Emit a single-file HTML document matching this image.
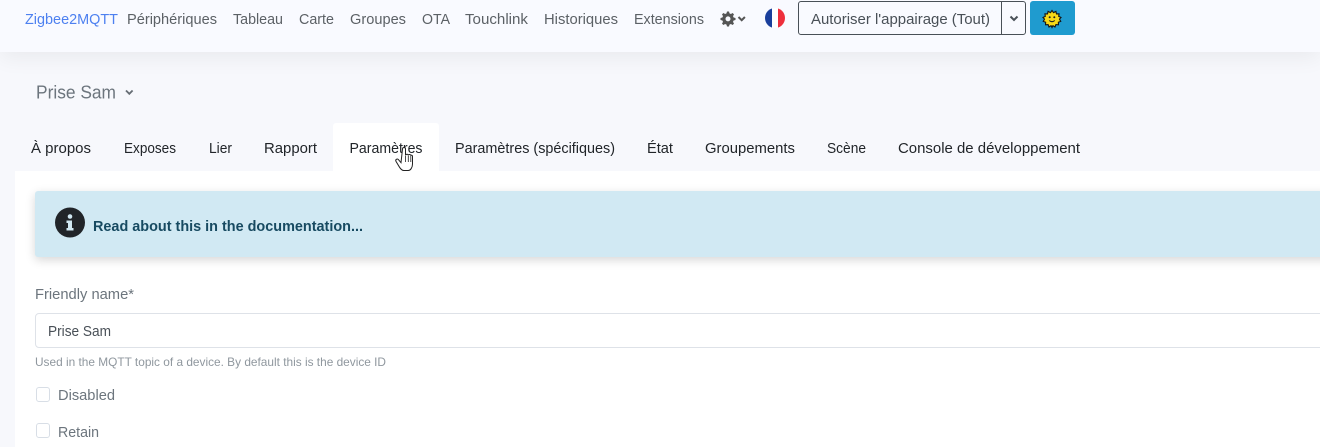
<!DOCTYPE html>
<html lang="fr">
<head>
<meta charset="utf-8">
<title>Zigbee2MQTT</title>
<style>
html,body{margin:0;padding:0;width:1320px;height:447px;overflow:hidden;background:#f7f8fc;font-family:"Liberation Sans",sans-serif}
.a{position:absolute;box-sizing:border-box}
svg{position:absolute;left:0;top:0}
text{font-family:"Liberation Sans",sans-serif}
</style>
</head>
<body>
<div class="a" style="left:0;top:0;width:1320px;height:52px;background:#f9faff;box-shadow:0 6px 22px rgba(0,0,0,.06)"></div>
<div class="a" style="left:333px;top:123px;width:106px;height:50px;background:#fff;border-radius:3px 3px 0 0"></div>
<div class="a" style="left:15px;top:171px;width:1305px;height:276px;background:#fff"></div>
<div class="a" style="left:35px;top:191px;width:1300px;height:66px;background:#d1e9f3;border-radius:3px;box-shadow:0 3px 10px rgba(0,0,0,.16)"></div>
<div class="a" style="left:35px;top:313px;width:1300px;height:35px;background:#fff;border:1px solid #dee2e8;border-radius:4px"></div>
<div class="a" style="left:36px;top:387px;width:14px;height:15px;background:#fff;border:1px solid #d8dee6;border-radius:3px"></div>
<div class="a" style="left:36px;top:423px;width:14px;height:15px;background:#fff;border:1px solid #d8dee6;border-radius:3px"></div>
<div class="a" style="left:798px;top:1px;width:228px;height:34px;border:1px solid #495057;border-radius:3px"></div>
<div class="a" style="left:1001px;top:1px;width:1px;height:34px;background:#495057"></div>
<div class="a" style="left:1030px;top:1px;width:45px;height:34px;background:#1f9bcf;border-radius:3px"></div>

<svg width="1320" height="447" viewBox="0 0 1320 447" xmlns="http://www.w3.org/2000/svg">
  <g font-size="15" fill="#5c6166">
    <text x="25" y="24" textLength="93" lengthAdjust="spacingAndGlyphs" fill="#4d80f0">Zigbee2MQTT</text>
    <text x="127" y="24" textLength="90" lengthAdjust="spacingAndGlyphs">Périphériques</text>
    <text x="233" y="24" textLength="50" lengthAdjust="spacingAndGlyphs">Tableau</text>
    <text x="299" y="24" textLength="35" lengthAdjust="spacingAndGlyphs">Carte</text>
    <text x="350" y="24" textLength="56" lengthAdjust="spacingAndGlyphs">Groupes</text>
    <text x="422" y="24" textLength="28" lengthAdjust="spacingAndGlyphs">OTA</text>
    <text x="465" y="24" textLength="63" lengthAdjust="spacingAndGlyphs">Touchlink</text>
    <text x="544" y="24" textLength="74" lengthAdjust="spacingAndGlyphs">Historiques</text>
    <text x="634" y="24" textLength="70" lengthAdjust="spacingAndGlyphs">Extensions</text>
    <text x="811" y="24" textLength="179" lengthAdjust="spacingAndGlyphs" fill="#495057">Autoriser l'appairage (Tout)</text>
  </g>

  <!-- gear -->
  <path fill="#555" fill-rule="evenodd" d="M727 11.500h2l.5 1.900 1.400.6 1.700-1 1.400 1.400-1 1.700.6 1.400 1.900.5v2l-1.900.5-.6 1.400 1 1.700-1.400 1.400-1.700-1-1.400.6-.5 1.900h-2l-.5-1.900-1.400-.6-1.700 1-1.400-1.400 1-1.700-.6-1.400-1.900-.5v-2l1.900-.5.6-1.400-1-1.700 1.400-1.400 1.700 1 1.400-.6zM728 16.400a2.500 2.500 0 1 0 0 5 2.500 2.500 0 0 0 0-5z"/>
  <path d="M738.500 17l3.200 3.200 3.200-3.200" fill="none" stroke="#555" stroke-width="2"/>
  <!-- flag -->
  <clipPath id="f"><circle cx="775" cy="18" r="10"/></clipPath>
  <g clip-path="url(#f)">
    <rect x="765" y="8" width="7" height="20" fill="#1a3f9c"/>
    <rect x="772" y="8" width="6" height="20" fill="#fff"/>
    <rect x="778" y="8" width="7" height="20" fill="#ee2f3c"/>
  </g>
  <path d="M1010.500 16.500l3.500 3.500 3.500-3.500" fill="none" stroke="#495057" stroke-width="2"/>
  <!-- sun -->
  <g transform="translate(1052,18.500)">
    <path d="M0-9.500l1.800 2.600 2.800-1.500.7 3 3-.1-.4 3 2.700 1.200L8.800.8 10.300 3.300l-2.800 1.100.1 3-3-.2-1.100 2.800-2.400-1.600L0 10.600l-1.100-2.200-2.400 1.600-1.100-2.800-3 .2.100-3-2.800-1.100L-8.800.8-10.600-1.300l2.700-1.200-.4-3 3 .1.700-3 2.800 1.500z" fill="#f7d917" stroke="#161616" stroke-width="1.300" transform="scale(.85)"/>
    <circle cx="-2.300" cy="-1.300" r="1" fill="#222"/><circle cx="2.300" cy="-1.300" r="1" fill="#222"/>
    <path d="M-2.800 2q2.800 2.400 5.600 0" fill="none" stroke="#222" stroke-width="1"/>
  </g>

  <text x="36" y="98.500" font-size="18.500" fill="#6c757d" textLength="80" lengthAdjust="spacingAndGlyphs">Prise Sam</text>
  <path d="M126 90.500l3.300 3.300 3.300-3.300" fill="none" stroke="#666d74" stroke-width="1.800"/>

  <g font-size="15" fill="#212529">
    <text x="31" y="153" textLength="60" lengthAdjust="spacingAndGlyphs">À propos</text>
    <text x="124" y="153" textLength="52" lengthAdjust="spacingAndGlyphs">Exposes</text>
    <text x="209" y="153" textLength="23" lengthAdjust="spacingAndGlyphs">Lier</text>
    <text x="264" y="153" textLength="53" lengthAdjust="spacingAndGlyphs">Rapport</text>
    <text x="349.500" y="153" textLength="73" lengthAdjust="spacingAndGlyphs">Paramètres</text>
    <text x="455" y="153" textLength="160" lengthAdjust="spacingAndGlyphs">Paramètres (spécifiques)</text>
    <text x="647" y="153" textLength="26" lengthAdjust="spacingAndGlyphs">État</text>
    <text x="705" y="153" textLength="90" lengthAdjust="spacingAndGlyphs">Groupements</text>
    <text x="827" y="153" textLength="39" lengthAdjust="spacingAndGlyphs">Scène</text>
    <text x="898" y="153" textLength="182" lengthAdjust="spacingAndGlyphs">Console de développement</text>
  </g>

  <!-- hand cursor -->
  <path d="M402.500 149c0-2 3-2 3 0v6.500c.2-1.600 2.700-1.600 2.800 0 .2-1.300 2.400-1.300 2.500.2.300-.8 1.700-.7 1.700.7v7.600c0 3.500-2 6.500-4.200 6.500h-4.500c-2.200 0-3.300-1.700-4.300-3.300l-3.500-5.800c-1-1.900 1.300-3.200 2.500-1.700l2.500 3z" fill="#fff" stroke="#222" stroke-width="1"/>
  <path d="M405.500 156v6M408.300 156v6M410.800 156v6" stroke="#222" stroke-width=".8"/>

  <!-- info -->
  <circle cx="70" cy="222.500" r="15" fill="#212529"/>
  <circle cx="70" cy="216.500" r="2.300" fill="#d1e9f3"/>
  <path d="M66.500 220.500h5.500v7.500h1.500v2.500h-7v-2.500h1.500v-5h-1.500z" fill="#d1e9f3"/>
  <text x="93" y="231" font-size="14.800" font-weight="bold" fill="#174a61" textLength="270" lengthAdjust="spacingAndGlyphs">Read about this in the documentation...</text>

  <text x="35" y="299" font-size="15" fill="#6c757d" textLength="99" lengthAdjust="spacingAndGlyphs">Friendly name*</text>
  <text x="48" y="336" font-size="15" fill="#495057" textLength="63" lengthAdjust="spacingAndGlyphs">Prise Sam</text>
  <text x="35" y="366" font-size="12" fill="#8f979e" textLength="351" lengthAdjust="spacingAndGlyphs">Used in the MQTT topic of a device. By default this is the device ID</text>
  <text x="58" y="400" font-size="15" fill="#6c757d" textLength="57" lengthAdjust="spacingAndGlyphs">Disabled</text>
  <text x="58" y="437" font-size="15" fill="#6c757d" textLength="41" lengthAdjust="spacingAndGlyphs">Retain</text>
</svg>
</body>
</html>
